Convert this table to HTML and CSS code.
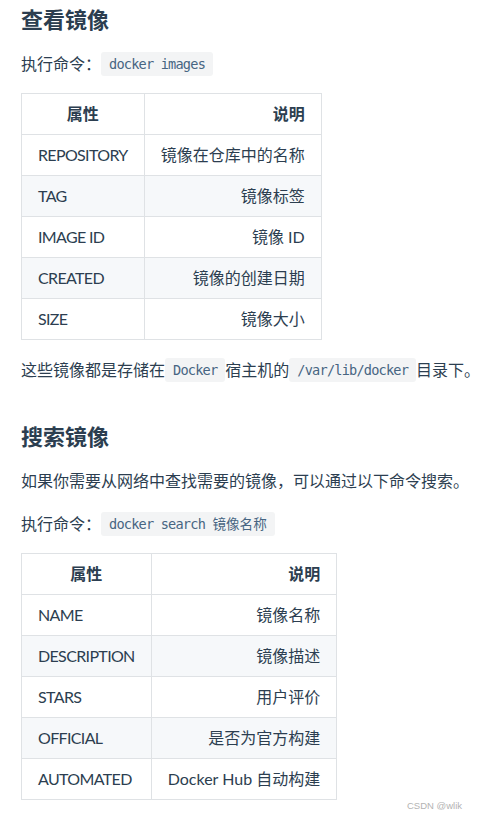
FILE: index.html
```html
<!DOCTYPE html>
<html lang="zh-CN">
<head>
<meta charset="utf-8">
<title>查看镜像</title>
<link rel="stylesheet" href="styles.css">
</head>
<body>
<main class="doc">
  <h2 class="title first">查看镜像</h2>
  <p class="para">执行命令：<code class="code">docker images</code></p>
  <table class="tbl">
    <thead>
      <tr><th class="c1">属性</th><th class="c2">说明</th></tr>
    </thead>
    <tbody>
      <tr><td class="c1">REPOSITORY</td><td class="c2">镜像在仓库中的名称</td></tr>
      <tr><td class="c1">TAG</td><td class="c2">镜像标签</td></tr>
      <tr><td class="c1">IMAGE ID</td><td class="c2">镜像 ID</td></tr>
      <tr><td class="c1">CREATED</td><td class="c2">镜像的创建日期</td></tr>
      <tr><td class="c1">SIZE</td><td class="c2">镜像大小</td></tr>
    </tbody>
  </table>
  <p class="para">这些镜像都是存储在<code class="code">Docker</code>宿主机的<code class="code">/var/lib/docker</code>目录下。</p>

  <h2 class="title">搜索镜像</h2>
  <p class="para">如果你需要从网络中查找需要的镜像，可以通过以下命令搜索。</p>
  <p class="para">执行命令：<code class="code">docker search <span class="code-cjk">镜像名称</span></code></p>
  <table class="tbl">
    <thead>
      <tr><th class="c1">属性</th><th class="c2">说明</th></tr>
    </thead>
    <tbody>
      <tr><td class="c1">NAME</td><td class="c2">镜像名称</td></tr>
      <tr><td class="c1">DESCRIPTION</td><td class="c2">镜像描述</td></tr>
      <tr><td class="c1">STARS</td><td class="c2">用户评价</td></tr>
      <tr><td class="c1">OFFICIAL</td><td class="c2">是否为官方构建</td></tr>
      <tr><td class="c1">AUTOMATED</td><td class="c2">Docker Hub 自动构建</td></tr>
    </tbody>
  </table>
</main>
<div class="watermark">CSDN @wlik</div>
</body>
</html>
```

FILE: styles.css
```css
html, body {
  margin: 0;
  padding: 0;
  background: #ffffff;
}

body {
  font-family: "Lato", "Noto Sans CJK SC", sans-serif;
  font-size: 16px;
  color: #2c3e50;
  position: relative;
  min-height: 819px;
  overflow: hidden;
}

.doc {
  padding: 6px 0 0 21px;
  white-space: nowrap;
}

.title {
  font-family: "Lato", "Noto Sans CJK SC", sans-serif;
  font-size: 22px;
  font-weight: 700;
  line-height: 28px;
  margin: 40px 0 16px;
  color: #2c3e50;
}

.title.first {
  margin-top: 0;
}

.para {
  margin: 16px 0;
  line-height: 27px;
}

.code {
  font-family: "DejaVu Sans Mono", "Noto Sans CJK SC", monospace;
  font-size: 13.6px;
  letter-spacing: -0.8px;
  line-height: 1;
  color: #476582;
  background: #f3f4f5;
  padding: 4px 8px 4px 8px;
  border-radius: 3px;
  vertical-align: 1px;
}

.code-cjk {
  letter-spacing: 0;
  font-family: "Noto Sans CJK SC", sans-serif;
}

.tbl {
  border-collapse: collapse;
  margin: 16px 0;
}

.tbl th,
.tbl td {
  border: 1px solid #dfe2e5;
  padding: 8px 16px;
  line-height: 24px;
}

.tbl th {
  font-weight: 700;
}

.tbl th.c1 {
  text-align: center;
}

.tbl td.c1 {
  text-align: left;
  letter-spacing: -0.65px;
}

.tbl .c2 {
  text-align: right;
}

.tbl tbody tr:nth-child(2n) {
  background: #f6f8fa;
}

.watermark {
  position: absolute;
  right: 15px;
  top: 800px;
  font-family: "Liberation Sans", sans-serif;
  font-size: 9.5px;
  color: #b3b3b3;
}
```
